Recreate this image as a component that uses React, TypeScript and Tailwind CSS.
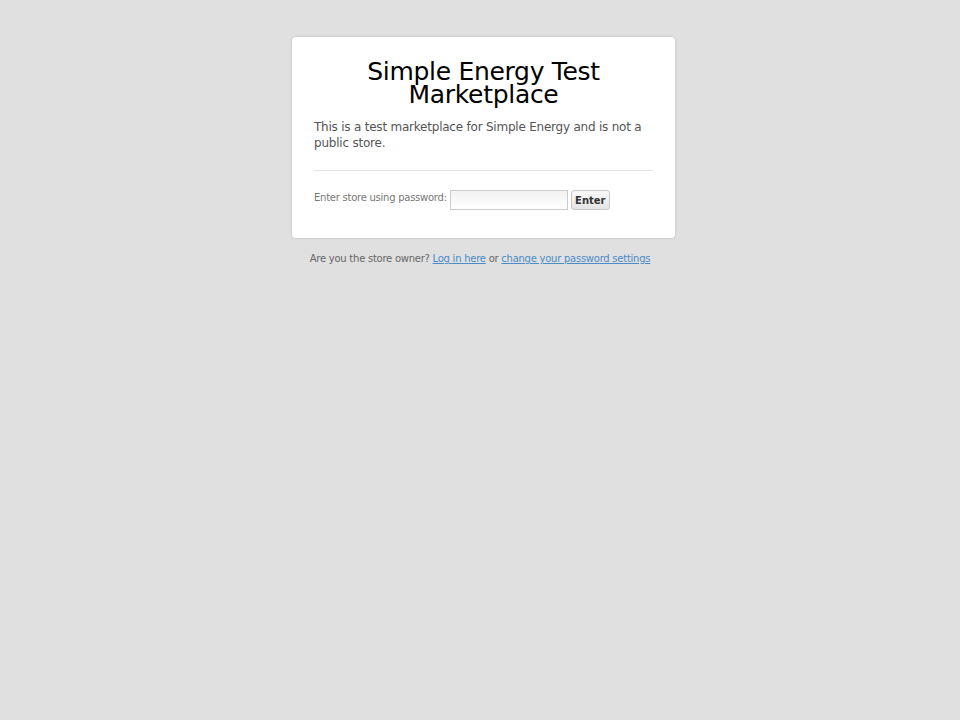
export default function App() {
  return (
    <div className="min-h-[720px] w-full bg-[#e0e0e0] font-['DejaVu_Sans',sans-serif] pt-[37px]">
      <div className="pl-[7px]">
        <div className="mx-auto w-[383px] rounded-[4px] bg-white px-[22px] pt-[23px] pb-[28px] shadow-[0_0_3px_rgba(0,0,0,0.15)]">
          <h1 className="text-center text-[25px] leading-[23px] tracking-[-0.3px] text-black">
            Simple Energy Test Marketplace
          </h1>
          <p className="mt-[13px] text-[12px] leading-[16px] tracking-[-0.22px] text-[#555]">
            This is a test marketplace for Simple Energy and is not a public store.
          </p>
          <hr className="mt-[19px] border-t border-[#e5e5e5]" />
          <form className="mt-[19px] flex items-start gap-[3px]">
            <label className="pt-[2px] text-[10px] leading-[12px] tracking-[-0.25px] text-[#777]">
              Enter store using password:
            </label>
            <input
              type="password"
              className="h-[20px] w-[118px] border border-[#ccc] bg-gradient-to-b from-[#f2f2f2] to-white outline-none"
            />
            <button
              type="button"
              className="h-[20px] w-[39px] rounded-[3px] border border-[#c8c8c8] bg-gradient-to-b from-[#fafafa] to-[#e4e4e4] text-[10px] font-bold text-[#333]"
            >
              Enter
            </button>
          </form>
        </div>
      </div>
      <p className="mt-[15px] text-center text-[10px] leading-[12px] tracking-[-0.25px] text-[#666]">
        Are you the store owner?{" "}
        <a href="#" className="text-[#4a8bc8] underline">Log in here</a> or{" "}
        <a href="#" className="text-[#4a8bc8] underline">change your password settings</a>
      </p>
    </div>
  );
}
